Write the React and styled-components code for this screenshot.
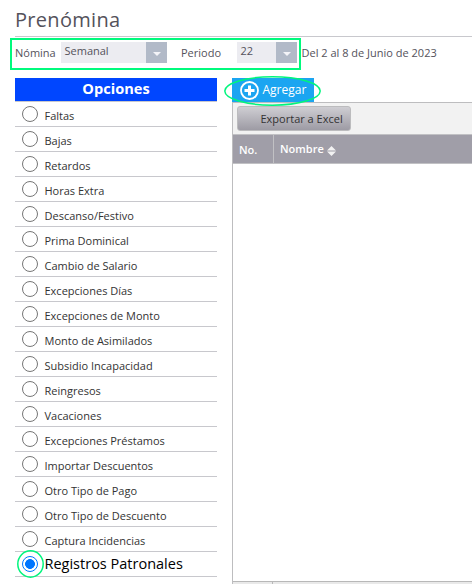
import React, { useState } from 'react';
import styled, { createGlobalStyle } from 'styled-components';

const GlobalStyle = createGlobalStyle`
  * {
    box-sizing: border-box;
  }
  body {
    margin: 0;
    background: #fff;
    font-family: 'Open Sans', 'Noto Sans', sans-serif;
    font-size: 11px;
    color: #54525b;
    overflow: hidden;
  }
`;

const Page = styled.div`
  height: 584px;
  padding-left: 15px;
  display: flex;
  flex-direction: column;
  overflow: hidden;
`;

const Title = styled.h1`
  height: 37px;
  margin: 0;
  padding-top: 6px;
  border-bottom: 1px solid #c8c8cd;
  font-size: 20px;
  font-weight: 400;
  line-height: 27px;
  letter-spacing: 0.3px;
  color: #54525b;
`;

const Filters = styled.div`
  height: 41px;
  padding-top: 1px;
  display: flex;
  align-items: flex-start;
`;

const FilterBox = styled.div`
  width: 291px;
  height: 32px;
  margin-left: -5px;
  padding: 2px 2px 0 3px;
  flex: none;
  display: flex;
  border: 2px solid #00fa7d;
`;

const FilterLabel = styled.label`
  width: ${props => props.$width}px;
  margin-left: ${props => props.$left || 0}px;
  line-height: 22px;
  white-space: nowrap;
`;

const Select = styled.div`
  width: ${props => props.$width}px;
  height: 21px;
  padding-left: 3.5px;
  display: flex;
  justify-content: space-between;
  background: #ececf1;
  line-height: 18px;
`;

const Arrow = styled.span`
  width: 21px;
  height: 21px;
  display: flex;
  align-items: center;
  justify-content: center;
  background: #b2bac8;
  &:after {
    content: '';
    margin-top: 2px;
    border: 4px solid transparent;
    border-top-color: #f4f4f8;
    border-bottom: 0;
  }
`;

const Dates = styled.div`
  margin-left: 0.5px;
  padding-top: 4px;
  line-height: 22px;
  white-space: nowrap;
`;

const Columns = styled.div`
  flex: 1;
  min-height: 0;
  display: flex;
  gap: 15px;
`;

const Options = styled.div`
  width: 202px;
  flex: none;
`;

const OptionsTitle = styled.div`
  height: 24px;
  border-bottom: 1px solid #c8c8cd;
  background: #0046ff;
  background-clip: padding-box;
  font-size: 14.6px;
  font-weight: 700;
  line-height: 21px;
  text-align: center;
  color: #fff;
`;

const Option = styled.label`
  height: 25px;
  padding-left: 7px;
  display: flex;
  align-items: flex-start;
  border-bottom: 1px solid #c8c8cd;
  font-size: ${props => (props.$checked ? 14.5 : 11)}px;
  line-height: ${props => (props.$checked ? 23 : 27)}px;
  color: ${props => (props.$checked ? '#000' : '#333')};
  white-space: nowrap;
`;

const RadioSlot = styled.span`
  position: relative;
  width: 16px;
  height: 16px;
  margin: 4px 6.5px 0 0;
  flex: none;
`;

const Radio = styled.input`
  appearance: none;
  display: block;
  width: 16px;
  height: 16px;
  margin: 0;
  border: 1px solid #767676;
  border-radius: 50%;
  &:checked {
    border-color: #0075ff;
    background: radial-gradient(circle, #0075ff 4.6px, #fff 5.2px);
  }
`;

const Ring = styled.svg`
  position: absolute;
  top: ${props => props.$top}px;
  left: ${props => props.$left}px;
  z-index: 1;
  pointer-events: none;
`;

const Content = styled.div`
  flex: 1;
  min-width: 0;
  display: flex;
  flex-direction: column;
`;

const AddButton = styled.button`
  position: relative;
  width: 82px;
  height: 24px;
  padding: 0 0 0 8px;
  flex: none;
  display: flex;
  align-items: center;
  gap: 3.5px;
  border: 0;
  background: #1ba5f1;
  font-family: inherit;
  font-size: 12px;
  line-height: 22px;
  color: #fff;
`;

const AddLabel = styled.span`
  padding-bottom: 1px;
`;

const Grid = styled.div`
  flex: 1;
  min-height: 0;
  display: flex;
  flex-direction: column;
  border-top: 1px solid #bdbdbf;
  border-left: 1px solid #bdbdbf;
`;

const Toolbar = styled.div`
  height: 32px;
  padding: 3px 4px;
  flex: none;
  border-bottom: 1px solid #c1c1c4;
  background: #f2f2f2;
`;

const ExportButton = styled.button`
  display: block;
  width: 114px;
  height: 25px;
  padding: 0 0 0 22.5px;
  border: 1px solid #bcbcbe;
  border-radius: 3px;
  background: linear-gradient(#cfced3, #9d9ba4);
  font-family: inherit;
  font-size: 11px;
  line-height: 22px;
  text-align: left;
  color: #333;
  white-space: nowrap;
`;

const GridHead = styled.div`
  height: 29px;
  flex: none;
  display: flex;
  border-bottom: 1px solid #c1c1c4;
  background: #a09ea8;
  font-weight: 600;
  line-height: 30px;
  color: #fff;
`;

const HeadNumber = styled.div`
  width: 41px;
  padding-left: 6px;
  border-right: 1px solid #c1c1c4;
`;

const HeadName = styled.div`
  padding-left: 6px;
  display: flex;
  gap: 3.5px;
  line-height: 28px;
`;

const GridBody = styled.div`
  flex: 1;
`;

const GridFoot = styled.div`
  height: 3px;
  flex: none;
  border-top: 1px solid #b8b8b8;
  background: #e9e9e9;
`;

const FootCell = styled.div`
  width: 40px;
  height: 2px;
  border-right: 1px solid #b8b8b8;
`;

const SortIcon = styled.svg`
  margin-top: 11px;
`;

const options = [
  'Faltas',
  'Bajas',
  'Retardos',
  'Horas Extra',
  'Descanso/Festivo',
  'Prima Dominical',
  'Cambio de Salario',
  'Excepciones Días',
  'Excepciones de Monto',
  'Monto de Asimilados',
  'Subsidio Incapacidad',
  'Reingresos',
  'Vacaciones',
  'Excepciones Préstamos',
  'Importar Descuentos',
  'Otro Tipo de Pago',
  'Otro Tipo de Descuento',
  'Captura Incidencias',
  'Registros Patronales',
];

const PlusIcon = () => (
  <svg width="19" height="19" viewBox="0 0 19 19" fill="none" stroke="#fff">
    <circle cx="9.5" cy="9.5" r="8.5" strokeWidth="1.8" />
    <path d="M9.5 4.5v10M4.5 9.5h10" strokeWidth="3" />
  </svg>
);

const Highlight = ({ width, height, top, left }) => (
  <Ring $top={top} $left={left} width={width} height={height} fill="none" stroke="#00f57d">
    <ellipse
      cx={width / 2}
      cy={height / 2}
      rx={width / 2 - 0.8}
      ry={height / 2 - 0.8}
      strokeWidth="1.5"
    />
  </Ring>
);

export default function App() {
  const [selected, setSelected] = useState('Registros Patronales');

  return (
    <Page>
      <GlobalStyle />
      <Title>Prenómina</Title>
      <Filters>
        <FilterBox>
          <FilterLabel $width={46}>Nómina</FilterLabel>
          <Select $width={106}>Semanal<Arrow /></Select>
          <FilterLabel $width={56} $left={14}>Periodo</FilterLabel>
          <Select $width={60}>22<Arrow /></Select>
        </FilterBox>
        <Dates>Del 2 al 8 de Junio de 2023</Dates>
      </Filters>
      <Columns>
        <Options>
          <OptionsTitle>Opciones</OptionsTitle>
          {options.map(name => (
            <Option key={name} $checked={name === selected}>
              <RadioSlot>
                <Radio
                  type="radio"
                  name="option"
                  checked={name === selected}
                  onChange={() => setSelected(name)}
                />
                {name === selected && <Highlight width={27} height={28} top={-6} left={-5.5} />}
              </RadioSlot>
              {name}
            </Option>
          ))}
        </Options>
        <Content>
          <AddButton>
            <PlusIcon />
            <AddLabel>Agregar</AddLabel>
            <Highlight width={97} height={30} top={-2} left={-8} />
          </AddButton>
          <Grid>
            <Toolbar>
              <ExportButton>Exportar a Excel</ExportButton>
            </Toolbar>
            <GridHead>
              <HeadNumber>No.</HeadNumber>
              <HeadName>
                Nombre
                <SortIcon width="9" height="10" viewBox="0 0 9 10" fill="#f2f2f2">
                  <path d="M4.5 0L9 4.5H0zM0 5.5h9L4.5 10z" />
                </SortIcon>
              </HeadName>
            </GridHead>
            <GridBody />
            <GridFoot>
              <FootCell />
            </GridFoot>
          </Grid>
        </Content>
      </Columns>
    </Page>
  );
}
